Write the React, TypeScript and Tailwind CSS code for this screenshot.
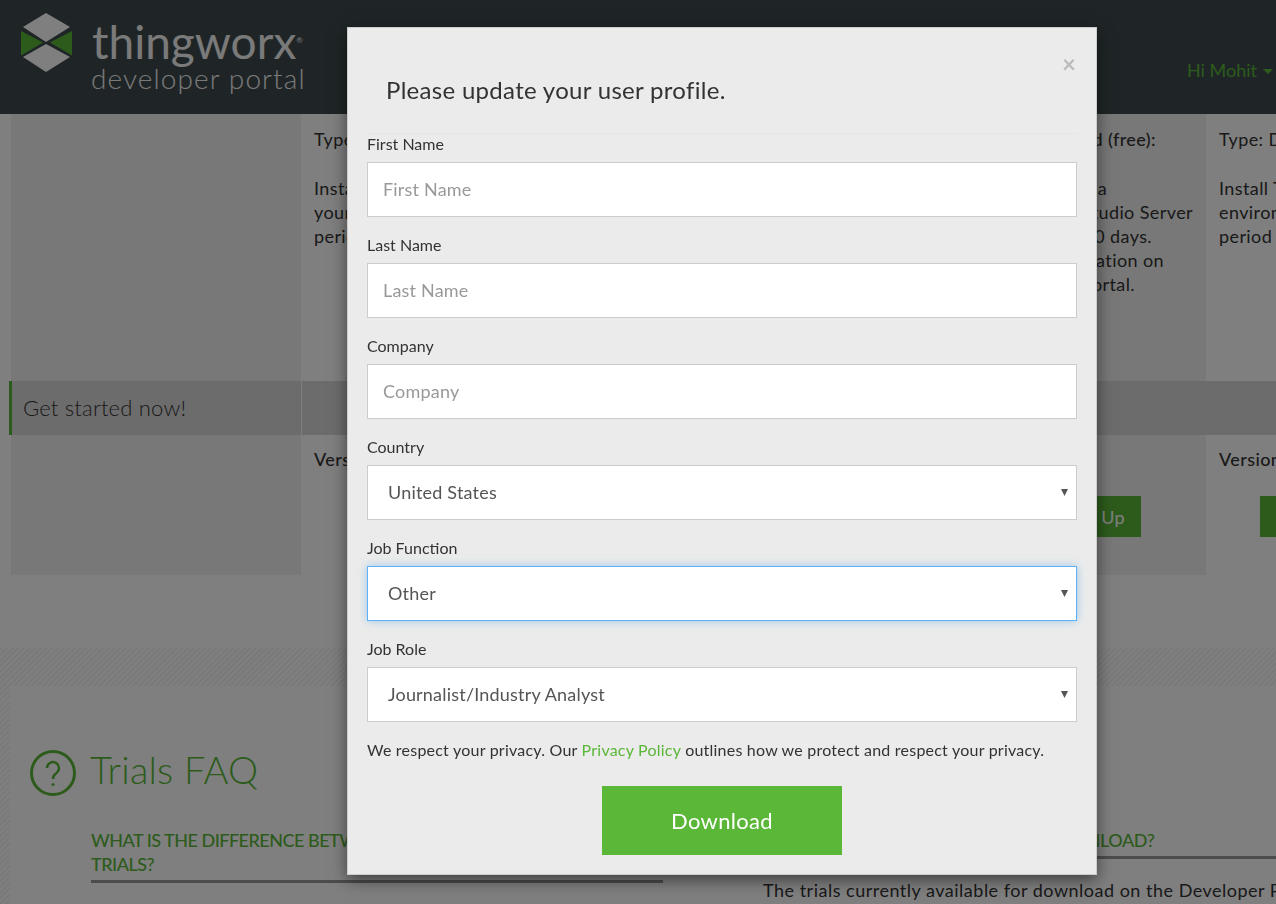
import React from "react";

const font = "font-['Lato','Liberation_Sans',sans-serif]";

const Field = ({ label, placeholder }: { label: string; placeholder: string }) => (
  <div className="mb-[19px]">
    <label className="block text-[16px] leading-[18px] mb-[9px] text-[#333]">{label}</label>
    <input
      placeholder={placeholder}
      className="block w-full h-[55px] px-[15px] pb-[2px] bg-white border border-[#ccc] text-[18px] tracking-[0.2px] text-[#555] placeholder:text-[#999] outline-none"
    />
  </div>
);

const SelectField = ({ label, value, focused }: { label: string; value: string; focused?: boolean }) => (
  <div className="mb-[19px]">
    <label className="block text-[16px] leading-[18px] mb-[9px] text-[#333]">{label}</label>
    <div className="relative">
      <select
        defaultValue={value}
        className={
          focused
            ? "block w-full h-[55px] px-[20px] appearance-none bg-white border border-[#5fb0f5] shadow-[0_0_8px_rgba(102,175,233,0.6)] text-[18px] tracking-[0.2px] text-[#555] outline-none"
            : "block w-full h-[55px] px-[20px] appearance-none bg-white border border-[#ccc] text-[18px] tracking-[0.2px] text-[#555] outline-none"
        }
      >
        <option>{value}</option>
      </select>
      <svg className="absolute right-[9px] top-[23px]" width="7" height="8" viewBox="0 0 7 8">
        <path d="M0 1h7L3.500 8z" fill="#555" />
      </svg>
    </div>
  </div>
);

const Logo = () => (
  <div className="flex items-start">
    <svg className="mt-[13px] ml-[21px]" width="52" height="60" viewBox="21 13 52 60">
      <path d="M46 13l24 14-24 15-23-15z" fill="#ffffff" />
      <path d="M46 44l24 13-24 15-23-15z" fill="#ffffff" />
      <path d="M21 31l22 11.500-22 13z" fill="#5ab738" />
      <path d="M72 31L50 42.500l22 13z" fill="#5ab738" />
    </svg>
    <div className="ml-[18px] text-[#f4f4f4]">
      <div className="flex items-start h-[50px] mt-[17px] ml-[1px]">
        <span className="text-[46px] leading-[50px]">thingworx</span>
        <span className="text-[8px] leading-[8px] mt-[19px]">®</span>
      </div>
      <div className="text-[28px] leading-[28px] -mt-[3px] tracking-[1.1px] font-light">developer portal</div>
    </div>
  </div>
);

export default function App() {
  return (
    <div className={`${font} relative h-[904px] overflow-hidden bg-white text-[#333]`}>
      <header className="h-[114px] bg-[#3e4a4c] flex justify-between">
        <Logo />
        <div className="flex items-center gap-[6px] pt-[26px] text-[18px] text-[#5ab738]">
          Hi Mohit
          <span className="w-0 h-0 mr-[3px] mt-[3px] border-x-[5px] border-t-[5px] border-x-transparent border-t-[#5ab738]" />
        </div>
      </header>

      <section className="grid grid-cols-[290px_1px_452px_452px_1fr] grid-rows-[267px_54px_140px] pl-[11px] text-[18px] leading-[24px] tracking-[0.4px]">
        <div className="bg-[#f0f0f0]" />
        <div />
        <div className="pt-[13px] pl-[12px]">
          <p>Type: Download</p>
          <p className="mt-[25px]">
            Install ThingWorx
            <br />
            your own environment
            <br />
            period of time
          </p>
        </div>
        <div className="bg-[#f0f0f0] pt-[13px] text-right">
          <p className="pr-[50px] font-medium">Hosted (free):</p>
          <p className="mt-[25px] pr-[99px]">Use a</p>
          <p className="pr-[13px]">ThingWorx Foundation Studio Server</p>
          <p className="pr-[54px]">for up to 30 days.</p>
          <p className="pr-[42px]">Build your application on</p>
          <p className="pr-[71px]">the portal.</p>
        </div>
        <div className="pt-[13px] pl-[13px] whitespace-nowrap">
          <p>Type: Download</p>
          <p className="mt-[25px]">
            Install ThingWorx
            <br />
            environment
            <br />
            period of time
          </p>
        </div>

        <div className="col-span-1 -ml-[2px] bg-[#d8d8d8] border-l-[3px] border-[#5ab738] pl-[11px] text-[22px] leading-[54px] tracking-[0.2px] font-light">
          Get started now!
        </div>
        <div className="bg-white" />
        <div className="col-span-3 bg-[#d8d8d8]" />

        <div className="bg-[#f0f0f0]" />
        <div />
        <div className="pt-[12px] pl-[12px] font-medium">Version</div>
        <div className="bg-[#f0f0f0] flex justify-end items-start pt-[61px] pr-[65px]">
          <button className="h-[41px] px-[16px] bg-[#5ab738] text-white">Sign Up</button>
        </div>
        <div className="pt-[12px] pl-[13px] font-medium">
          Version
          <div className="h-[41px] w-[60px] ml-[41px] mt-[25px] bg-[#5ab738]" />
        </div>
      </section>

      <section className="mt-[73px] h-[300px] pt-[38px] bg-[repeating-linear-gradient(135deg,#f4f4f4_0,#f4f4f4_2px,#ffffff_2px,#ffffff_4px)]">
        <div className="h-full ml-[10px] bg-white pt-[62px] pl-[20px]">
          <div className="flex items-center gap-[14px] h-[50px]">
            <svg width="46" height="46" viewBox="0 0 46 46" fill="none" stroke="#5ab738" strokeWidth="3">
              <circle cx="23" cy="23" r="21.500" />
              <path d="M17 18a6 6 0 1 1 9.500 5c-2.500 1.600-3.500 3-3.500 6" strokeWidth="2.500" />
              <circle cx="23" cy="34.500" r="1.500" fill="#5ab738" stroke="none" />
            </svg>
            <h2 className="text-[38px] font-light tracking-[0.2px] text-[#5ab738] leading-[50px] mb-[8px]">Trials FAQ</h2>
          </div>
          <div className="grid grid-cols-[572px_1fr] gap-x-[100px] mt-[30px] pl-[61px]">
            <div>
              <h3 className="text-[18px] leading-[24px] font-medium tracking-[-0.5px] text-[#5ab738] pb-[4px] border-b-[3px] border-[#999] whitespace-nowrap">
                WHAT IS THE DIFFERENCE BETWEEN THE
                <br />
                TRIALS?
              </h3>
            </div>
            <div>
              <h3 className="text-[18px] leading-[24px] font-medium tracking-[-0.5px] text-[#5ab738] pb-[4px] border-b-[3px] border-[#999] whitespace-nowrap">
                WHICH TRIALS ARE AVAILABLE TO DOWNLOAD?
              </h3>
              <p className="mt-[19px] text-[18px] leading-[24px] tracking-[0.5px] whitespace-nowrap">
                The trials currently available for download on the Developer Portal
              </p>
            </div>
          </div>
        </div>
      </section>

      <div className="fixed inset-0 bg-black/50" />

      <div className="absolute left-[347px] top-[27px] w-[750px] h-[848px] bg-[#ebebeb] border border-[#ccc] shadow-[0_5px_15px_rgba(0,0,0,0.5)] px-[19px]">
        <div className="relative h-[106px] border-b border-[#e5e5e5] pl-[19px] pt-[48px]">
          <button className="absolute right-[1px] top-[23px] text-[24px] leading-[26px] font-bold text-[#bbb]">×</button>
          <h4 className="text-[24px] leading-[28px] tracking-[0.3px] text-[#333]">Please update your user profile.</h4>
        </div>
        <div className="pt-[1px]">
          <Field label="First Name" placeholder="First Name" />
          <Field label="Last Name" placeholder="Last Name" />
          <Field label="Company" placeholder="Company" />
          <SelectField label="Country" value="United States" />
          <SelectField label="Job Function" value="Other" focused />
          <SelectField label="Job Role" value="Journalist/Industry Analyst" />
        </div>
        <p className="text-[16px] leading-[24px] -mt-[3px] tracking-[0.22px] text-[#333] whitespace-nowrap">
          We respect your privacy. Our <a className="text-[#5ab738]">Privacy Policy</a> outlines how we protect and respect your privacy.
        </p>
        <div className="flex justify-center mt-[24px]">
          <button className="w-[240px] h-[69px] bg-[#5ab738] text-white text-[22px] tracking-[0.3px]">Download</button>
        </div>
      </div>
    </div>
  );
}
